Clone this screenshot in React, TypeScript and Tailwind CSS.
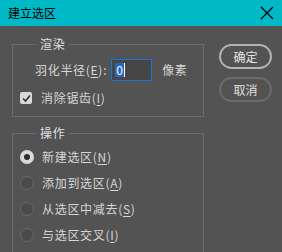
import React from 'react';

const font = { fontFamily: '"Noto Sans CJK SC", "Noto Sans", sans-serif' };

// mnemonic letter, underlined like the Windows dialog
const Key = ({ k }: { k: string }) => (
  <span>
    (<span className="underline underline-offset-2">{k}</span>)
  </span>
);

const Radio = ({ checked, label, k }: { checked?: boolean; label: string; k: string }) => (
  <div className="flex items-center h-[26px] gap-[8px]">
    {checked ? (
      <span className="w-[14px] h-[14px] rounded-full bg-[#d9d9d9] flex items-center justify-center">
        <span className="w-[6px] h-[6px] rounded-full bg-[#2e2e2e]" />
      </span>
    ) : (
      <span className="w-[14px] h-[14px] rounded-full bg-[#4b4b4b] border border-[#6a6a6a]" />
    )}
    <span className="tracking-[0.7px]">
      {label}
      <Key k={k} />
    </span>
  </div>
);

export default function App() {
  return (
    <div className="w-[282px] h-[252px] bg-[#535353] overflow-hidden text-[12px] text-[#d6d6d6]" style={font}>
      {/* Title bar */}
      <div className="h-[26px] bg-[#00b9c6] flex items-center justify-between pl-[8px] pr-[7px] text-black">
        <span className="leading-[16px]">建立选区</span>
        <svg width="14" height="14" viewBox="0 0 14 14" className="mr-[1px]">
          <path d="M1 1 L13 13 M13 1 L1 13" stroke="#000" strokeWidth="1.2" />
        </svg>
      </div>

      <div className="flex">
        {/* Left column */}
        <div className="ml-[12px] w-[192px] flex flex-col">
          <fieldset className="mt-[10px] border border-[#6c6c6c] pl-[7px] pb-[10px]">
            <legend className="ml-[16px] px-[4px] leading-[16px] text-[#e2e2e2] tracking-[0.7px]">渲染</legend>
            <div className="flex items-center pt-[7px] pl-[15px]">
              <span className="tracking-[0.7px]">
                羽化半径<Key k="E" />:
              </span>
              <div className="ml-[4px] w-[41px] h-[22px] border-[1.5px] border-[#1f73d6] bg-[#464646] flex items-center pl-[3px]">
                <span className="bg-[#2368c4] text-white leading-[14px] px-[1px]">0</span>
                <span className="w-[1px] h-[14px] bg-white" />
              </div>
              <span className="ml-[10px] tracking-[0.7px]">像素</span>
            </div>
            <div className="flex items-center gap-[9px] mt-[9px] h-[16px]">
              <span className="w-[12px] h-[12px] rounded-[2px] bg-[#d9d9d9] flex items-center justify-center">
                <svg width="9" height="9" viewBox="0 0 9 9">
                  <path d="M1 4.5 L3.5 7 L8 1.5" fill="none" stroke="#333" strokeWidth="1.6" />
                </svg>
              </span>
              <span className="tracking-[0.7px]">
                消除锯齿<Key k="I" />
              </span>
            </div>
          </fieldset>

          <fieldset className="mt-[8px] border border-[#6c6c6c] pl-[7px] pt-[3px] pb-[10px]">
            <legend className="ml-[16px] px-[4px] leading-[16px] text-[#e2e2e2] tracking-[0.7px]">操作</legend>
            <Radio checked label="新建选区" k="N" />
            <Radio label="添加到选区" k="A" />
            <Radio label="从选区中减去" k="S" />
            <Radio label="与选区交叉" k="I" />
          </fieldset>
        </div>

        {/* Buttons */}
        <div className="ml-[15px] mt-[18px] flex flex-col gap-[8px]">
          <button className="w-[53px] h-[25px] rounded-full border-2 border-[#b2b2b2] text-[#e6e6e6] leading-none">
            确定
          </button>
          <button className="w-[53px] h-[25px] rounded-full border-2 border-[#6b6b6b] text-[#e0e0e0] leading-none">
            取消
          </button>
        </div>
      </div>
    </div>
  );
}
